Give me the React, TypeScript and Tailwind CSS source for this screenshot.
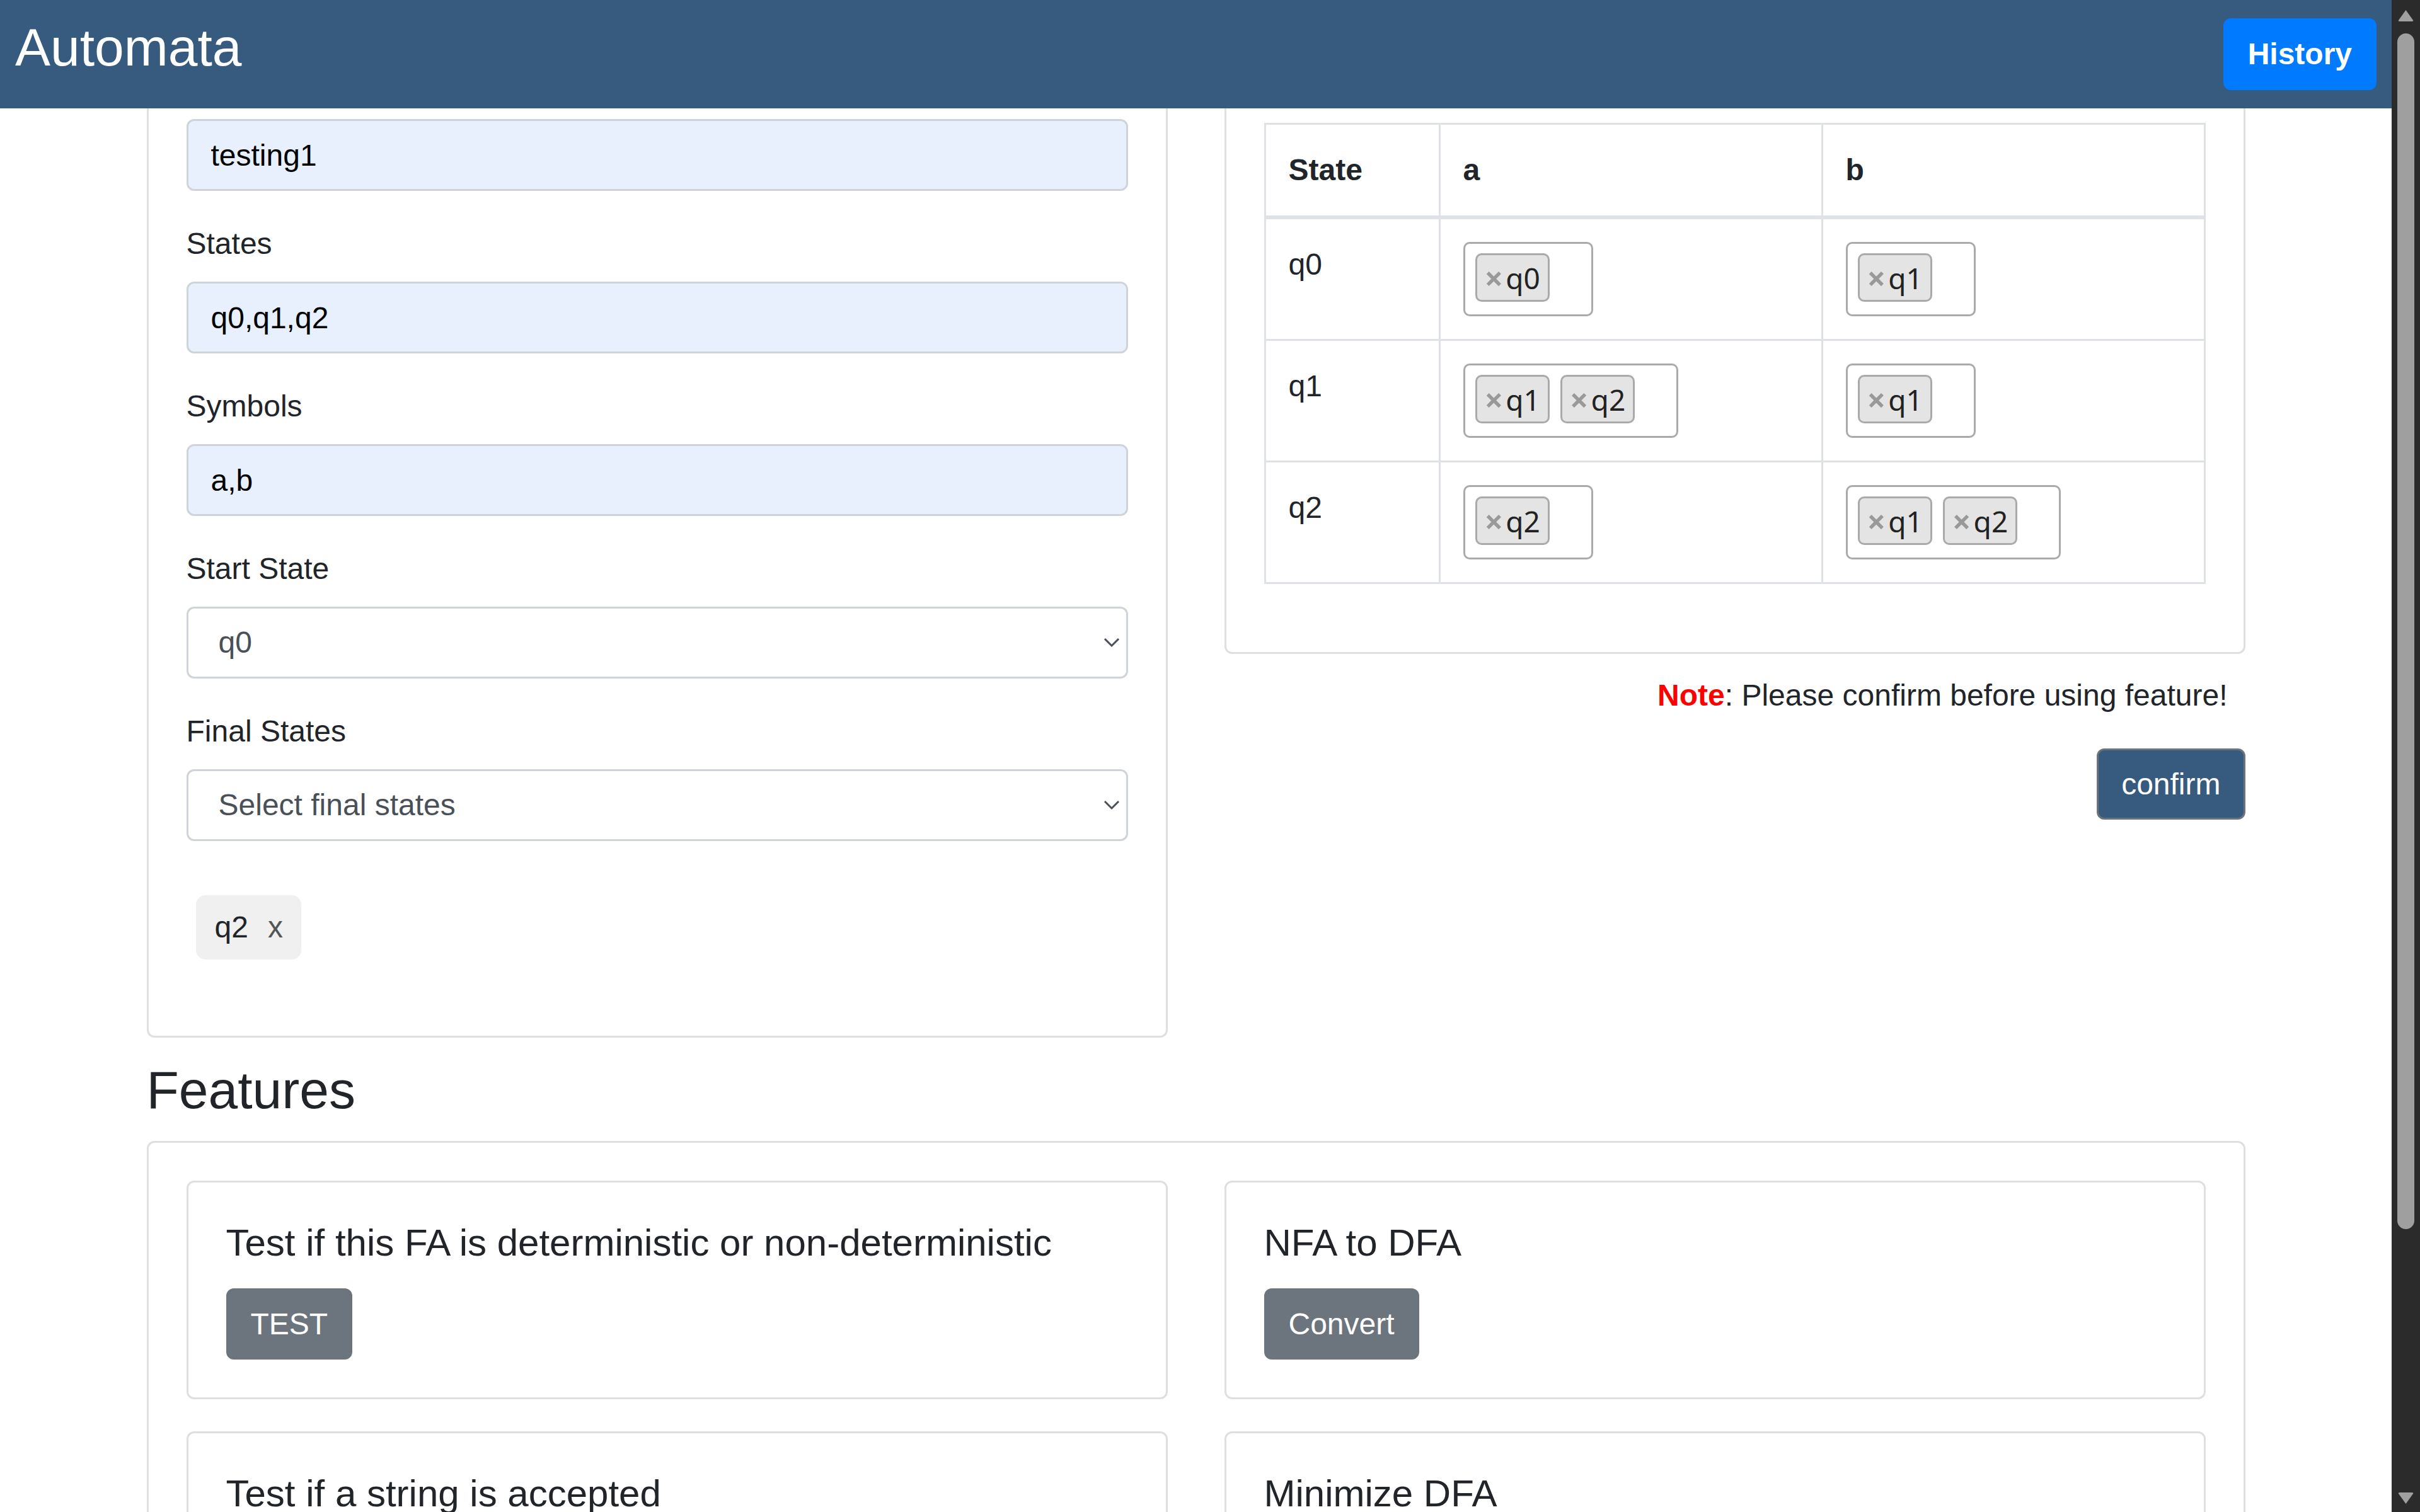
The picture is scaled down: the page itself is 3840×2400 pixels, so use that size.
import React from "react";

type Row = { state: string; a: string[]; b: string[] };

const rows: Row[] = [
  { state: "q0", a: ["q0"], b: ["q1"] },
  { state: "q1", a: ["q1", "q2"], b: ["q1"] },
  { state: "q2", a: ["q2"], b: ["q1", "q2"] },
];

const features = [
  { title: "Test if this FA is deterministic or non-deterministic", action: "TEST" },
  { title: "NFA to DFA", action: "Convert" },
  { title: "Test if a string is accepted", action: "Test" },
  { title: "Minimize DFA", action: "Minimize" },
];

function TextField({ label, value }: { label?: string; value: string }) {
  return (
    <div className="mb-[48px]">
      {label && <label className="mb-[24px] block text-[48px] leading-[72px]">{label}</label>}
      <input
        readOnly
        value={value}
        className="block h-[114px] w-full rounded-[12px] border-[3px] border-[#ced4da] bg-[#e8f0fe] px-[36px] text-[48px] text-black outline-none"
      />
    </div>
  );
}

function SelectField({ label, value, last }: { label: string; value: string; last?: boolean }) {
  return (
    <div className={last ? "" : "mb-[48px]"}>
      <label className="mb-[24px] block text-[48px] leading-[72px]">{label}</label>
      <div className="flex h-[114px] w-full items-center justify-between rounded-[12px] border-[3px] border-[#ced4da] bg-white pl-[48px] pr-[10px] text-[48px] text-[#495057]">
        <span>{value}</span>
        <svg width="26" height="16" viewBox="0 0 26 16" fill="none">
          <path d="M2 2 L13 13 L24 2" stroke="#495057" strokeWidth="3" />
        </svg>
      </div>
    </div>
  );
}

function TagBox({ tags }: { tags: string[] }) {
  return (
    <div className="flex w-fit rounded-[10px] border-[3px] border-[#aaaaaa] bg-white pb-[20px] pl-[16px] pr-[49px] pt-[15px] font-['Noto_Sans',sans-serif]">
      {tags.map((t) => (
        <div
          key={t}
          className="mr-[17px] flex h-[77px] items-center rounded-[10px] border-[3px] border-[#aaaaaa] bg-[#e4e4e4] px-[12px] text-[46px] leading-none text-[#222]"
        >
          <span className="mr-[4px] text-[52px] font-bold leading-none text-[#999999]">×</span>
          <span>{t}</span>
        </div>
      ))}
    </div>
  );
}

function FeatureCard({ title, action }: { title: string; action: string }) {
  return (
    <div className="rounded-[12px] border-[3px] border-[#dfdfdf] p-[60px]">
      <h5 className="mb-[36px] text-[60px] leading-[72px]">{title}</h5>
      <button className="h-[113px] rounded-[12px] border-[3px] border-[#6c757d] bg-[#6c757d] px-[36px] text-[48px] leading-[72px] text-white">
        {action}
      </button>
    </div>
  );
}

function Scrollbar() {
  return (
    <div className="flex h-full w-[45px] shrink-0 flex-col items-center bg-[#2b2b2b] pb-[11px] pt-[14px]">
      <svg width="27" height="21" viewBox="0 0 27 21">
        <path d="M13.5 2 L25 18 Q26 20 23 20 L4 20 Q1 20 2 18 Z" fill="#a0a0a0" />
      </svg>
      <div className="mt-[18px] h-[1898px] w-[27px] rounded-full bg-[#9f9f9f]" />
      <div className="flex-1" />
      <svg width="27" height="21" viewBox="0 0 27 21">
        <path d="M13.5 19 L25 3 Q26 1 23 1 L4 1 Q1 1 2 3 Z" fill="#a0a0a0" />
      </svg>
    </div>
  );
}

export default function App() {
  return (
    <div className="flex h-[2400px] w-full overflow-hidden bg-white font-['Liberation_Sans',Arial,sans-serif] text-[#212529]">
      <div className="flex min-w-0 flex-1 flex-col">
        <header className="flex h-[172px] shrink-0 items-center justify-between bg-[#375a7f] px-[24px]">
          <h3 className="pb-[21px] text-[84px] leading-[101px] text-white">Automata</h3>
          <button className="h-[114px] rounded-[12px] border-[3px] border-[#007bff] bg-[#007bff] px-[36px] text-[48px] font-bold leading-[72px] text-white">
            History
          </button>
        </header>

        <main className="mx-auto w-[3420px] px-[45px]">
          <div className="grid grid-cols-2 items-start gap-x-[90px]">
            {/* automaton definition */}
            <div className="rounded-b-[12px] border-[3px] border-t-0 border-[#dfdfdf] px-[60px] pb-[121px] pt-[17px]">
              <TextField value="testing1" />
              <TextField label="States" value="q0,q1,q2" />
              <TextField label="Symbols" value="a,b" />
              <SelectField label="Start State" value="q0" />
              <SelectField label="Final States" value="Select final states" last />
              <div className="ml-[15px] mt-[86px] flex h-[102px] w-fit items-center gap-[31px] rounded-[15px] bg-[#f0f0f0] pl-[30px] pr-[29px] text-[48px]">
                <span>q2</span>
                <span className="text-[#555555]">x</span>
              </div>
            </div>

            {/* transition table */}
            <div className="flex flex-col">
              <div className="rounded-b-[12px] border-[3px] border-t-0 border-[#dfdfdf] px-[60px] pb-[108px] pt-[23px]">
                <table className="w-full table-fixed border-collapse text-[48px] leading-[72px]">
                  <thead>
                    <tr>
                      <th className="w-[277px] border-[3px] border-b-[6px] border-[#dee2e6] p-[36px] text-left align-bottom font-bold">State</th>
                      <th className="border-[3px] border-b-[6px] border-[#dee2e6] p-[36px] text-left align-bottom font-bold">a</th>
                      <th className="border-[3px] border-b-[6px] border-[#dee2e6] p-[36px] text-left align-bottom font-bold">b</th>
                    </tr>
                  </thead>
                  <tbody>
                    {rows.map((r) => (
                      <tr key={r.state}>
                        <td className="border-[3px] border-[#dee2e6] p-[36px] align-top">{r.state}</td>
                        <td className="border-[3px] border-[#dee2e6] p-[36px] align-top">
                          <TagBox tags={r.a} />
                        </td>
                        <td className="border-[3px] border-[#dee2e6] p-[36px] align-top">
                          <TagBox tags={r.b} />
                        </td>
                      </tr>
                    ))}
                  </tbody>
                </table>
              </div>
              <p className="mt-[30px] pr-[28px] text-right text-[48px] leading-[72px]">
                <span className="font-bold text-[#ff0000]">Note</span>: Please confirm before using feature!
              </p>
              <button className="mt-[48px] h-[113px] self-end rounded-[12px] border-[3px] border-[#6c757d] bg-[#375a7f] px-[36px] text-[48px] leading-[72px] text-white">
                confirm
              </button>
            </div>
          </div>

          <h3 className="mb-[30px] mt-[33px] text-[84px] leading-[101px]">Features</h3>
          <div className="rounded-[12px] border-[3px] border-[#dfdfdf] p-[60px]">
            <div className="grid grid-cols-2 gap-x-[90px] gap-y-[51px]">
              {features.map((f) => (
                <FeatureCard key={f.title} title={f.title} action={f.action} />
              ))}
            </div>
          </div>
        </main>
      </div>
      <Scrollbar />
    </div>
  );
}
